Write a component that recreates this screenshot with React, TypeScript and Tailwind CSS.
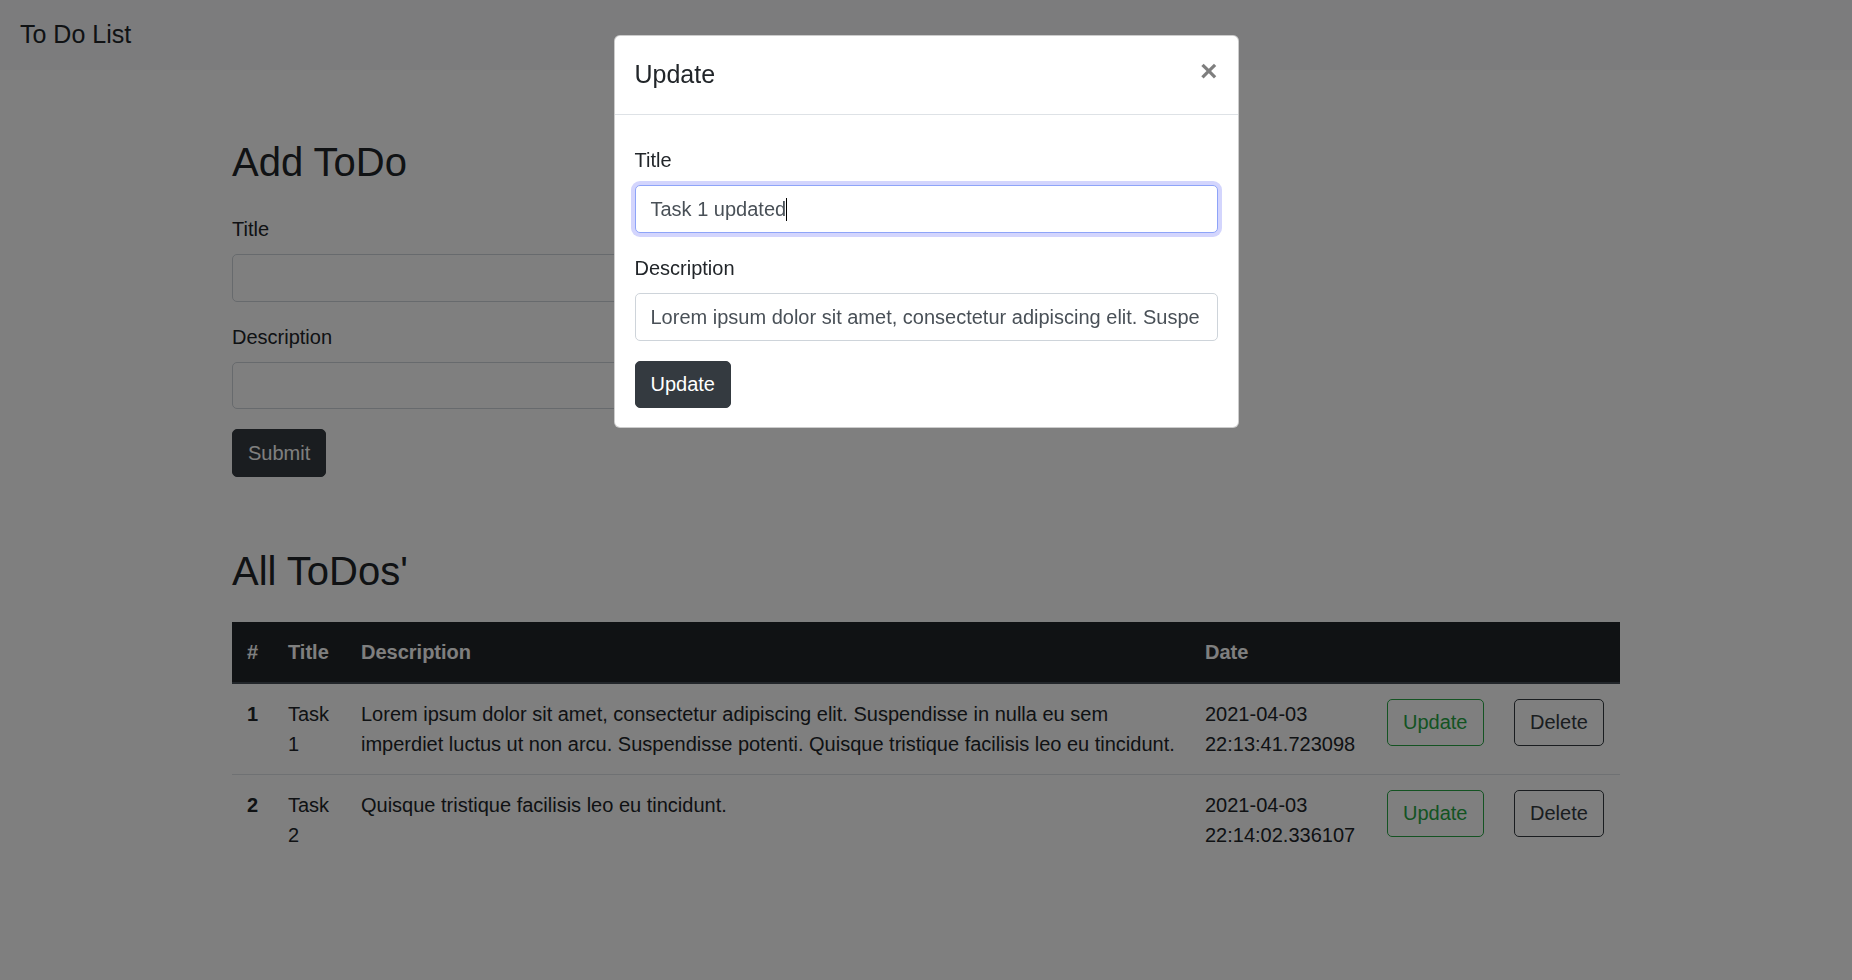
import React from 'react'

const todos = [
  {
    sno: 1,
    title: 'Task 1',
    desc: 'Lorem ipsum dolor sit amet, consectetur adipiscing elit. Suspendisse in nulla eu sem imperdiet luctus ut non arcu. Suspendisse potenti. Quisque tristique facilisis leo eu tincidunt.',
    date: '2021-04-03 22:13:41.723098',
  },
  {
    sno: 2,
    title: 'Task 2',
    desc: 'Quisque tristique facilisis leo eu tincidunt.',
    date: '2021-04-03 22:14:02.336107',
  },
]

function Field({ label }: { label: string }) {
  return (
    <div className="mb-[20px]">
      <label className="block mb-[10px]">{label}</label>
      <div className="h-[47.5px] w-[800px] bg-white border border-[#ced4da] rounded-[5px]" />
    </div>
  )
}

function UpdateModal() {
  return (
    <div className="fixed inset-0 z-40 bg-black/50 flex justify-center items-start pt-[35px]">
      <div className="w-[625px] bg-white border border-black/20 rounded-[6px] text-[#212529]">
        <div className="flex items-start justify-between p-5 border-b border-[#dee2e6]">
          <h5 className="text-[25px] leading-[37.5px]">Update</h5>
          <button className="-m-5 ml-auto p-5 text-[30px] font-bold leading-none text-black opacity-50">×</button>
        </div>
        <div className="px-5 pt-[30px] pb-[19px]">
          <div className="mb-[20px]">
            <label className="block mb-[10px]">Title</label>
            <div className="h-[48px] flex items-center pt-px px-[15px] bg-white border border-[#8ea4f8] rounded-[5px] shadow-[0_0_0_4px_#d3d5fd] text-[#495057]">
              <span>Task 1 updated</span>
              <span className="inline-block w-px h-[23px] bg-black" />
            </div>
          </div>
          <div className="mb-[20px]">
            <label className="block mb-[10px]">Description</label>
            <div className="h-[48px] flex items-center px-[15px] bg-white border border-[#ced4da] rounded-[5px] text-[#495057]">
              <div className="overflow-hidden whitespace-nowrap mr-[2px]">{todos[0].desc}</div>
            </div>
          </div>
          <button className="h-[47.5px] px-[15px] bg-[#343a40] border border-[#343a40] rounded-[5px] text-white">Update</button>
        </div>
      </div>
    </div>
  )
}

export default function App() {
  return (
    <div className="min-h-screen bg-white text-[#212529] text-[20px] leading-[30px] font-['Liberation_Sans',Arial,sans-serif]">
      <nav className="h-[70px] bg-[#f8f9fa] px-5 flex items-center">
        <span className="text-[25px] leading-[37.5px]">To Do List</span>
      </nav>
      <div className="w-[1388px] mx-auto">
        <h2 className="mt-[68px] mb-[28px] text-[40px] leading-[48px]">Add ToDo</h2>
        <form>
          <Field label="Title" />
          <Field label="Description" />
          <button type="button" className="h-[47.5px] px-[15px] bg-[#343a40] border border-[#343a40] rounded-[5px] text-white">Submit</button>
        </form>
        <h2 className="mt-[70px] mb-[27px] text-[40px] leading-[48px]">All ToDos'</h2>
        <table className="w-full table-fixed border-collapse text-left">
          <thead>
            <tr className="bg-[#212529] text-white">
              <th className="w-[41px] p-[15px] font-bold border-b-2 border-[#454d55]">#</th>
              <th className="w-[73px] p-[15px] font-bold border-b-2 border-[#454d55]">Title</th>
              <th className="p-[15px] font-bold border-b-2 border-[#454d55]">Description</th>
              <th className="w-[182px] p-[15px] font-bold border-b-2 border-[#454d55]">Date</th>
              <th className="w-[127px] p-[15px] border-b-2 border-[#454d55]"></th>
              <th className="w-[121px] p-[15px] border-b-2 border-[#454d55]"></th>
            </tr>
          </thead>
          <tbody>
            {todos.map((t, i) => (
              <tr key={t.sno} className={i > 0 ? 'border-t border-[#dee2e6]' : ''}>
                <th className="p-[15px] align-top font-bold">{t.sno}</th>
                <td className="p-[15px] align-top">{t.title}</td>
                <td className="p-[15px] align-top">{t.desc}</td>
                <td className="p-[15px] align-top">{t.date}</td>
                <td className="p-[15px] align-top">
                  <button className="h-[47.5px] px-[15px] border border-[#28a745] rounded-[5px] text-[#28a745]">Update</button>
                </td>
                <td className="p-[15px] align-top">
                  <button className="h-[47.5px] px-[15px] border border-[#343a40] rounded-[5px] text-[#343a40]">Delete</button>
                </td>
              </tr>
            ))}
          </tbody>
        </table>
      </div>
      <UpdateModal />
    </div>
  )
}
